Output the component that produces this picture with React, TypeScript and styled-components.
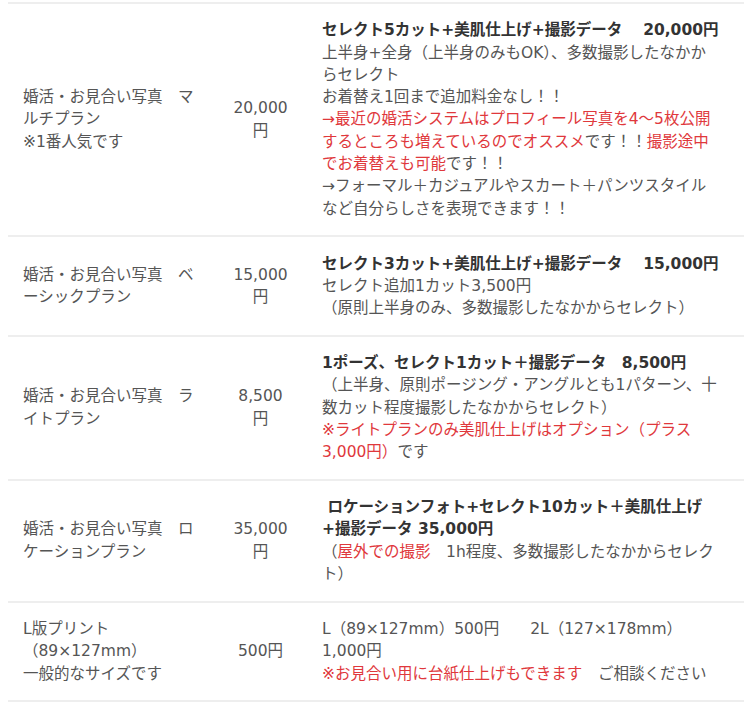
import React from 'react';
import styled, { createGlobalStyle } from 'styled-components';

const GlobalStyle = createGlobalStyle`
  html, body {
    margin: 0;
    padding: 0;
    background: #fff;
  }
  body {
    font-family: 'DejaVu Sans', 'Noto Sans CJK JP', sans-serif;
    color: #555;
  }
`;

const Page = styled.div`
  padding: 2px 6px 0 8px;
`;

const PriceTable = styled.table`
  width: 736px;
  table-layout: fixed;
  border-collapse: collapse;
  border-top: 2px solid #eee;
  font-size: 15.5px;
  line-height: 22.3px;
  color: #555;
`;

const Row = styled.tr`
  border-bottom: 2px solid #eee;
`;

const Cell = styled.td`
  padding: 15.3px 0;
  vertical-align: middle;
`;

const NameCell = styled(Cell)`
  padding-left: 15px;
  padding-right: 7px;
`;

const PriceCell = styled(Cell)`
  padding-left: 24px;
  padding-right: 25px;
  text-align: center;
`;

const DetailCell = styled(Cell)`
  padding-left: 8px;
  padding-right: 23px;
`;

const Title = styled.div`
  font-weight: bold;
  color: #333;
`;

const Red = styled.span`
  color: #e0383c;
`;

type PlanRow = {
  name: React.ReactNode;
  price: string;
  detail: React.ReactNode;
};

const ROWS: PlanRow[] = [
  {
    name: (
      <>
        婚活・お見合い写真　マルチプラン
        <br />
        ※1番人気です
      </>
    ),
    price: '20,000円',
    detail: (
      <>
        <Title>セレクト5カット+美肌仕上げ+撮影データ　 20,000円</Title>
        上半身+全身（上半身のみもOK）、多数撮影したなかからセレクト
        <br />
        お着替え1回まで追加料金なし！！
        <br />
        <Red>→最近の婚活システムはプロフィール写真を4〜5枚公開するところも増えているのでオススメ</Red>
        です！！<Red>撮影途中でお着替えも可能</Red>です！！
        <br />
        →フォーマル＋カジュアルやスカート＋パンツスタイルなど自分らしさを表現できます！！
      </>
    ),
  },
  {
    name: <>婚活・お見合い写真　ベーシックプラン</>,
    price: '15,000円',
    detail: (
      <>
        <Title>セレクト3カット+美肌仕上げ+撮影データ　 15,000円</Title>
        セレクト追加1カット3,500円
        <br />
        （原則上半身のみ、多数撮影したなかからセレクト）
      </>
    ),
  },
  {
    name: <>婚活・お見合い写真　ライトプラン</>,
    price: '8,500円',
    detail: (
      <>
        <Title>1ポーズ、セレクト1カット＋撮影データ　8,500円</Title>
        （上半身、原則ポージング・アングルとも1パターン、十数カット程度撮影したなかからセレクト）
        <br />
        <Red>※ライトプランのみ美肌仕上げはオプション（プラス3,000円）</Red>です
      </>
    ),
  },
  {
    name: <>婚活・お見合い写真　ロケーションプラン</>,
    price: '35,000円',
    detail: (
      <>
        <Title>{'\u00a0'}ロケーションフォト+セレクト10カット＋美肌仕上げ+撮影データ 35,000円</Title>
        （<Red>屋外での撮影</Red>　1h程度、多数撮影したなかからセレクト）
      </>
    ),
  },
  {
    name: (
      <>
        L版プリント
        <br />
        （89×127mm）
        <br />
        一般的なサイズです
      </>
    ),
    price: '500円',
    detail: (
      <>
        L（89×127mm）500円　　2L（127×178mm）1,000円
        <br />
        <Red>※お見合い用に台紙仕上げもできます</Red>　ご相談ください
      </>
    ),
  },
];

export default function App() {
  return (
    <>
      <GlobalStyle />
      <Page>
        <PriceTable>
          <colgroup>
            <col style={{ width: 200 }} />
            <col style={{ width: 106 }} />
            <col />
          </colgroup>
          <tbody>
            {ROWS.map((row, i) => (
              <Row key={i}>
                <NameCell>{row.name}</NameCell>
                <PriceCell>{row.price}</PriceCell>
                <DetailCell>{row.detail}</DetailCell>
              </Row>
            ))}
          </tbody>
        </PriceTable>
      </Page>
    </>
  );
}
